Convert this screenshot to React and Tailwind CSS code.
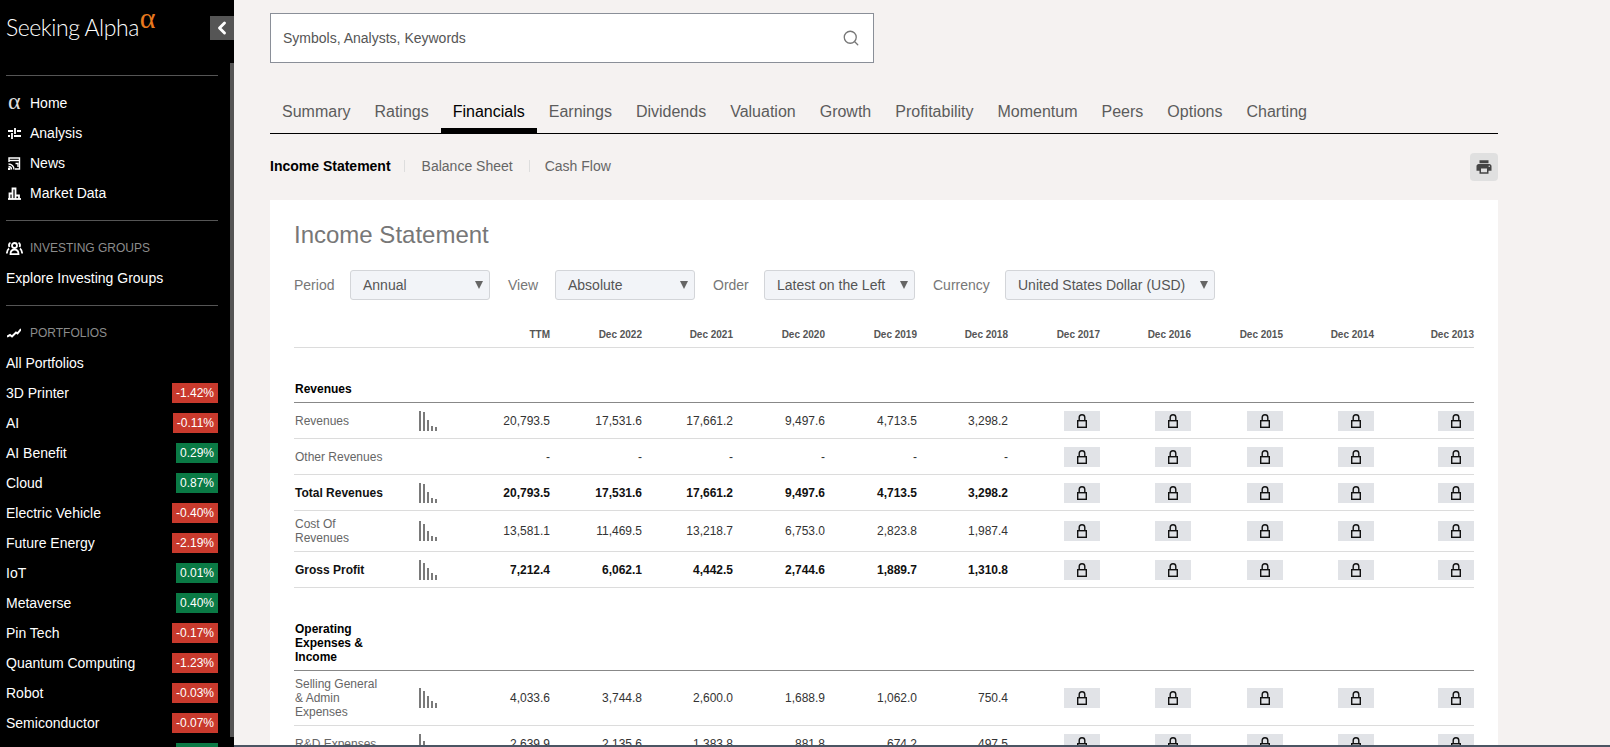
import { Search, ChevronLeft } from 'lucide-react';
import { MdPrint } from 'react-icons/md';

const menu = [
  { label: 'Home', icon: <AlphaIcon /> },
  { label: 'Analysis', icon: <TuneIcon /> },
  { label: 'News', icon: <NewsIcon /> },
  { label: 'Market Data', icon: <MarketIcon /> },
];

const portfolios = [
  ['3D Printer', '-1.42%'],
  ['AI', '-0.11%'],
  ['AI Benefit', '0.29%'],
  ['Cloud', '0.87%'],
  ['Electric Vehicle', '-0.40%'],
  ['Future Energy', '-2.19%'],
  ['IoT', '0.01%'],
  ['Metaverse', '0.40%'],
  ['Pin Tech', '-0.17%'],
  ['Quantum Computing', '-1.23%'],
  ['Robot', '-0.03%'],
  ['Semiconductor', '-0.07%'],
  ['Software', '0.52%'],
];

const tabs = ['Summary', 'Ratings', 'Financials', 'Earnings', 'Dividends', 'Valuation', 'Growth', 'Profitability', 'Momentum', 'Peers', 'Options', 'Charting'];

const filters = [
  { label: 'Period', value: 'Annual', labelW: 'w-[56px]', selectW: 'w-[140px]' },
  { label: 'View', value: 'Absolute', labelW: 'w-[47px]', selectW: 'w-[140px]' },
  { label: 'Order', value: 'Latest on the Left', labelW: 'w-[51px]', selectW: 'w-[151px]' },
  { label: 'Currency', value: 'United States Dollar (USD)', labelW: 'w-[72px]', selectW: 'w-[210px]' },
];

const years = ['TTM', 'Dec 2022', 'Dec 2021', 'Dec 2020', 'Dec 2019', 'Dec 2018', 'Dec 2017', 'Dec 2016', 'Dec 2015', 'Dec 2014', 'Dec 2013'];

const grid = 'grid grid-cols-[125px_40px_91px_92px_91px_92px_92px_91px_92px_91px_92px_91px_100px] items-center';

const revenueRows = [
  { label: 'Revenues', h: 'h-[36px]', bars: [20, 19, 11, 5, 4], values: ['20,793.5', '17,531.6', '17,661.2', '9,497.6', '4,713.5', '3,298.2'] },
  { label: 'Other Revenues', h: 'h-[36px]', values: ['-', '-', '-', '-', '-', '-'] },
  { label: 'Total Revenues', h: 'h-[36px]', bold: true, bars: [20, 19, 11, 5, 4], values: ['20,793.5', '17,531.6', '17,661.2', '9,497.6', '4,713.5', '3,298.2'] },
  { label: 'Cost Of Revenues', h: 'h-[41px]', bars: [20, 17, 10, 5, 4], values: ['13,581.1', '11,469.5', '13,218.7', '6,753.0', '2,823.8', '1,987.4'] },
  { label: 'Gross Profit', h: 'h-[36px]', bold: true, bars: [20, 17, 12, 7, 5], values: ['7,212.4', '6,062.1', '4,442.5', '2,744.6', '1,889.7', '1,310.8'] },
];

const expenseRows = [
  { label: 'Selling General & Admin Expenses', h: 'h-[55px]', bars: [20, 17, 12, 7, 5], values: ['4,033.6', '3,744.8', '2,600.0', '1,688.9', '1,062.0', '750.4'] },
  { label: 'R&D Expenses', h: 'h-[36px]', bars: [20, 13, 9, 6, 4], values: ['2,639.9', '2,135.6', '1,383.8', '881.8', '674.2', '497.5'] },
];

function AlphaIcon() {
  return <span className="-mt-[4px] font-['Liberation_Serif',serif] text-[24px] leading-none text-[#ddd]">α</span>;
}

function TuneIcon() {
  return (
    <svg width="13" height="11" viewBox="0 0 13 11" fill="none" stroke="#fff" strokeWidth="2">
      <path d="M0 3h5M9 3h4" />
      <path d="M7 0v6" strokeWidth="1.800" />
      <path d="M0 8h2M6 8h7" />
      <path d="M4 5v6" strokeWidth="1.800" />
    </svg>
  );
}

function NewsIcon() {
  return (
    <svg width="13" height="13" viewBox="0 0 13 13" fill="none" stroke="#fff" strokeWidth="1.400">
      <path d="M1 5V1h10.500v11H7" />
      <path d="M1 3.500h10.500" />
      <path d="M.5 7a5.500 5.500 0 0 1 5.500 5.500M.5 9.500a3 3 0 0 1 3 3" />
      <circle cx="1" cy="12" r=".7" fill="#fff" />
      <path d="M7.500 6.500h2.500v3.500" />
    </svg>
  );
}

function MarketIcon() {
  return (
    <svg width="13" height="13" viewBox="0 0 13 13" fill="none" stroke="#fff" strokeWidth="1.800">
      <path d="M0 12h13" />
      <path d="M1.500 12V6.500h3V12M4.500 12V1.500h3V12M7.500 12V8.500h3.500V12" />
    </svg>
  );
}

function GroupsIcon() {
  return (
    <svg width="17" height="13" viewBox="0 0 17 13" fill="none" stroke="#fff" strokeWidth="1.800">
      <circle cx="8.500" cy="3.500" r="2.500" />
      <path d="M4.500 12.200c0-3 1.500-4.500 4-4.500s4 1.500 4 4.500z" />
      <path d="M4.500 1C3 1.300 2.500 3 3.500 5M12.500 1c1.500.3 2 2 1 4M3 6.500C1.500 7.500 1 9.500.8 11.500M14 6.500c1.500 1 2 3 2.200 5" />
    </svg>
  );
}

function TrendIcon() {
  return (
    <svg width="14" height="10" viewBox="0 0 14 10" fill="none" stroke="#fff" strokeWidth="2">
      <path d="M0 8.500l3-1.500 2 1.500 4-4 1.500 1L14 1" />
    </svg>
  );
}

function LockIcon() {
  return (
    <svg width="10" height="14" viewBox="0 0 10 14" fill="none" stroke="#111" strokeWidth="1.400">
      <path d="M2.200 6.500V3.500a2.800 2.800 0 0 1 5.600 0v3" />
      <rect x=".7" y="6.700" width="8.600" height="6.600" />
    </svg>
  );
}

function SideRow({ children }) {
  return <div className="flex h-[30px] items-center text-sm text-white">{children}</div>;
}

function Sidebar() {
  return (
    <aside className="relative h-screen w-[234px] shrink-0 overflow-hidden bg-black pl-[6px] pr-[16px]">
      <div className="flex h-[76px] items-start border-b border-[#555] pt-[13px] text-white">
        <span className="font-['Lato',sans-serif] text-[23px] font-light leading-[28px] tracking-[-0.45px]">Seeking Alpha</span>
        <span className="-mt-[9px] ml-px font-['Liberation_Serif',serif] text-[30px] leading-[28px] text-[#e8791e]">α</span>
      </div>
      <button className="absolute right-0 top-[16px] flex h-6 w-6 items-center justify-center bg-[#555] text-white">
        <ChevronLeft size={20} strokeWidth={3.5} />
      </button>
      <div className="absolute bottom-[10px] right-0 top-[63px] w-1 bg-[#555]" />

      <nav className="mt-3 border-b border-[#555] pb-3">
        {menu.map(item => (
          <SideRow key={item.label}>
            <span className="flex w-[24px] items-center pl-[2px]">{item.icon}</span>
            {item.label}
          </SideRow>
        ))}
      </nav>

      <div className="mt-3 border-b border-[#555] pb-3">
        <div className="flex h-[30px] items-center text-xs text-[#8c8c8c]">
          <span className="flex w-[24px] items-center"><GroupsIcon /></span>
          INVESTING GROUPS
        </div>
        <SideRow>Explore Investing Groups</SideRow>
      </div>

      <div className="mt-3">
        <div className="flex h-[30px] items-center text-xs text-[#8c8c8c]">
          <span className="flex w-[24px] items-center pl-px"><TrendIcon /></span>
          PORTFOLIOS
        </div>
        <SideRow>All Portfolios</SideRow>
        {portfolios.map(([name, change]) => (
          <div key={name} className="flex h-[30px] items-center justify-between text-sm text-white">
            {name}
            <span className={`flex h-5 items-center px-1 text-xs ${change.startsWith('-') ? 'bg-[#c93a2d]' : 'bg-[#0a7a45]'}`}>
              {change}
            </span>
          </div>
        ))}
      </div>
    </aside>
  );
}

function Sparkline({ bars }) {
  return (
    <div className="flex h-5 items-end gap-[2px]">
      {bars.map((h, i) => (
        <span key={i} className="w-[2px] bg-[#7a7a7a]" style={{ height: h }} />
      ))}
    </div>
  );
}

function DataRow({ row }) {
  const text = row.bold ? 'font-bold text-[#111]' : 'text-[#333]';
  return (
    <div className={`${grid} ${row.h} border-b border-[#dcdcdc] text-xs leading-[14px]`}>
      <div className={`w-[90px] pl-px ${row.bold ? 'font-bold text-[#111]' : 'text-[#666]'}`}>{row.label}</div>
      <div>{row.bars && <Sparkline bars={row.bars} />}</div>
      {row.values.map((v, i) => (
        <div key={i} className={`text-right ${text}`}>{v}</div>
      ))}
      {[0, 1, 2, 3, 4].map(i => (
        <div key={i} className="flex justify-end">
          <span className="flex h-5 w-9 items-center justify-center bg-[#e1e3e7]"><LockIcon /></span>
        </div>
      ))}
    </div>
  );
}

function SectionHead({ title, h }) {
  return (
    <div className={`flex ${h} items-end border-b border-[#888] pb-[6px]`}>
      <div className="w-[90px] pl-px text-xs font-bold leading-[14px] text-black">{title}</div>
    </div>
  );
}

export default function App() {
  return (
    <div className="flex h-screen overflow-hidden bg-[#f5f2f1] font-['Liberation_Sans',Arial,sans-serif]">
      <Sidebar />
      <main className="flex min-w-0 flex-1 flex-col">
        <div className="flex-1 overflow-hidden pl-9 pt-[13px]">
          <div className="w-[1228px]">
            {/* Search */}
            <div className="flex h-[50px] w-[604px] items-center justify-between border border-[#8a8f98] bg-white pl-3 pr-[13px] text-sm text-[#555]">
              Symbols, Analysts, Keywords
              <Search size={18} className="text-[#777]" strokeWidth={1.75} />
            </div>

            {/* Tabs */}
            <div className="mt-[27px] flex h-[44px] items-start border-b border-black text-base">
              {tabs.map(tab => (
                <div
                  key={tab}
                  className={`h-[44px] border-b-[6px] px-3 pt-[11px] leading-[22px] ${tab === 'Financials' ? 'border-black text-black' : 'border-transparent text-[#5c5c5c]'}`}
                >
                  {tab}
                </div>
              ))}
            </div>

            {/* Sub tabs */}
            <div className="mt-[19px] flex h-7 items-center justify-between text-sm">
              <div className="flex items-center pb-[2px] text-[#666]">
                <span className="font-bold text-black">Income Statement</span>
                <span className="ml-[13px] mr-[17px] h-3 w-px bg-[#ddd]" />
                <span>Balance Sheet</span>
                <span className="ml-4 mr-[15px] h-3 w-px bg-[#ddd]" />
                <span>Cash Flow</span>
              </div>
              <button className="flex h-7 w-7 items-center justify-center rounded bg-[#e0e0e0] text-[#444]">
                <MdPrint size={18} />
              </button>
            </div>

            {/* Card */}
            <section className="mt-[19px] bg-white px-6 pb-6 pt-5">
              <h1 className="text-2xl leading-[30px] text-[#777]">Income Statement</h1>

              <div className="mt-5 flex gap-[18px] text-sm">
                {filters.map(f => (
                  <div key={f.label} className="flex items-center">
                    <span className={`${f.labelW} text-[#777]`}>{f.label}</span>
                    <div className={`${f.selectW} flex h-[30px] items-center justify-between rounded-[3px] border border-[#d3d5d9] bg-[#f2f4f8] pl-3 pr-[6px] text-[#555]`}>
                      {f.value}
                      <svg width="8" height="8" viewBox="0 0 8 8" fill="#666"><path d="M0 0h8L4 8z" /></svg>
                    </div>
                  </div>
                ))}
              </div>

              <div className={`${grid} mt-[23px] h-[25px] border-b border-[#dcdcdc] pb-[2px] text-[10px] font-bold text-[#555]`}>
                <div />
                <div />
                {years.map(y => (
                  <div key={y} className="text-right">{y}</div>
                ))}
              </div>

              <SectionHead title="Revenues" h="h-[55px]" />
              {revenueRows.map(row => <DataRow key={row.label} row={row} />)}

              <SectionHead title="Operating Expenses & Income" h="h-[83px]" />
              {expenseRows.map(row => <DataRow key={row.label} row={row} />)}
            </section>
          </div>
        </div>
        <div className="h-[2px] shrink-0 bg-[#4b5563]" />
      </main>
    </div>
  );
}
